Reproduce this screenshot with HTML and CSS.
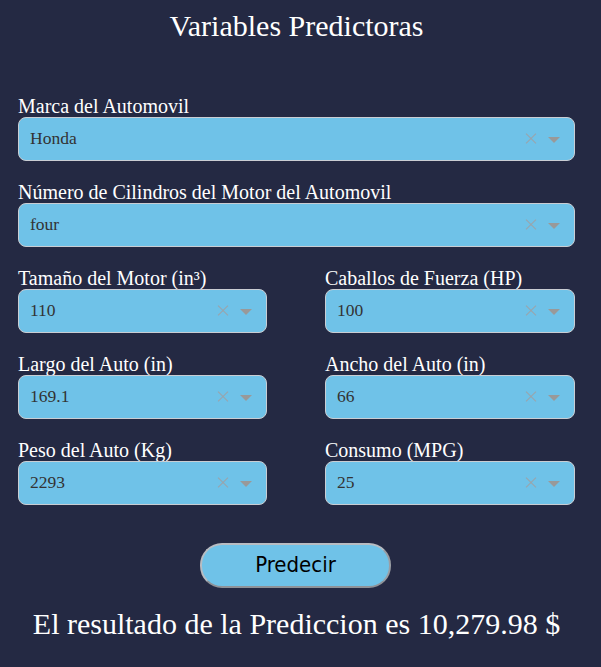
FILE: index.html
```html
<!DOCTYPE html>
<html lang="es">
<head>
<meta charset="utf-8">
<link rel="stylesheet" href="styles.css">
</head>
<body>
<main class="page">
  <h1 class="title">Variables Predictoras</h1>
  <div class="form">
    <div class="field full">
      <label class="label">Marca del Automovil</label>
      <div class="select"><span class="value">Honda</span><span class="icons"><span class="clear"></span><span class="arrow"></span></span></div>
    </div>
    <div class="field full">
      <label class="label">Número de Cilindros del Motor del Automovil</label>
      <div class="select"><span class="value">four</span><span class="icons"><span class="clear"></span><span class="arrow"></span></span></div>
    </div>
    <div class="field">
      <label class="label">Tamaño del Motor (in³)</label>
      <div class="select"><span class="value">110</span><span class="icons"><span class="clear"></span><span class="arrow"></span></span></div>
    </div>
    <div class="field">
      <label class="label">Caballos de Fuerza (HP)</label>
      <div class="select"><span class="value">100</span><span class="icons"><span class="clear"></span><span class="arrow"></span></span></div>
    </div>
    <div class="field">
      <label class="label">Largo del Auto (in)</label>
      <div class="select"><span class="value">169.1</span><span class="icons"><span class="clear"></span><span class="arrow"></span></span></div>
    </div>
    <div class="field">
      <label class="label">Ancho del Auto (in)</label>
      <div class="select"><span class="value">66</span><span class="icons"><span class="clear"></span><span class="arrow"></span></span></div>
    </div>
    <div class="field">
      <label class="label">Peso del Auto (Kg)</label>
      <div class="select"><span class="value">2293</span><span class="icons"><span class="clear"></span><span class="arrow"></span></span></div>
    </div>
    <div class="field">
      <label class="label">Consumo (MPG)</label>
      <div class="select"><span class="value">25</span><span class="icons"><span class="clear"></span><span class="arrow"></span></span></div>
    </div>
  </div>
  <div class="actions"><button class="btn">Predecir</button></div>
  <p class="result">El resultado de la Prediccion es 10,279.98 $</p>
</main>
</body>
</html>
```
FILE: styles.css
```css
html, body {
  margin: 0;
  padding: 0;
  background: #242943;
  height: 100%;
}
body {
  font-family: "Liberation Serif", "Times New Roman", serif;
  color: #ffffff;
}
.page {
  width: 557px;
  margin-left: 18px;
  padding-top: 8px;
}
.title {
  margin: 0;
  text-align: center;
  font-weight: normal;
  font-size: 30px;
  line-height: 36px;
}
.form {
  margin-top: 51px;
  display: grid;
  grid-template-columns: 249px 250px;
  column-gap: 58px;
  row-gap: 20px;
}
.full {
  grid-column: 1 / -1;
}
.field {
  display: flex;
  flex-direction: column;
}
.label {
  font-size: 20px;
  line-height: 22px;
}
.select {
  box-sizing: border-box;
  height: 44px;
  background: #6fc2e8;
  border: 1px solid #c9cdd3;
  border-radius: 8px;
  display: flex;
  align-items: center;
  padding: 0 14px 1px 11px;
}
.value {
  flex: 1;
  font-size: 17.5px;
  color: #333333;
}
.icons {
  display: flex;
  align-items: center;
  gap: 12px;
}
.clear {
  position: relative;
  width: 10px;
  height: 10px;
}
.clear::before, .clear::after {
  content: "";
  position: absolute;
  left: -2px;
  top: 4.5px;
  width: 14px;
  height: 1px;
  background: #9aa3aa;
  transform: rotate(45deg);
}
.clear::after {
  transform: rotate(-45deg);
}
.arrow {
  width: 0;
  height: 0;
  border-left: 6px solid transparent;
  border-right: 6px solid transparent;
  border-top: 6px solid #999999;
  margin-top: 2px;
}
.actions {
  display: flex;
  justify-content: center;
  margin-top: 38px;
}
.btn {
  box-sizing: border-box;
  width: 191px;
  height: 45px;
  margin-left: -2px;
  padding: 0 0 2px;
  background: #6fc2e8;
  border: 2px solid #b8bcc2;
  border-bottom-color: #8e9298;
  border-right-color: #9a9ea4;
  border-radius: 22px;
  font-family: "DejaVu Sans", Verdana, sans-serif;
  font-stretch: condensed;
  font-size: 22px;
  color: #000000;
}
.result {
  margin: 18px 0 0;
  text-align: center;
  font-size: 30px;
  line-height: 36px;
}
```
